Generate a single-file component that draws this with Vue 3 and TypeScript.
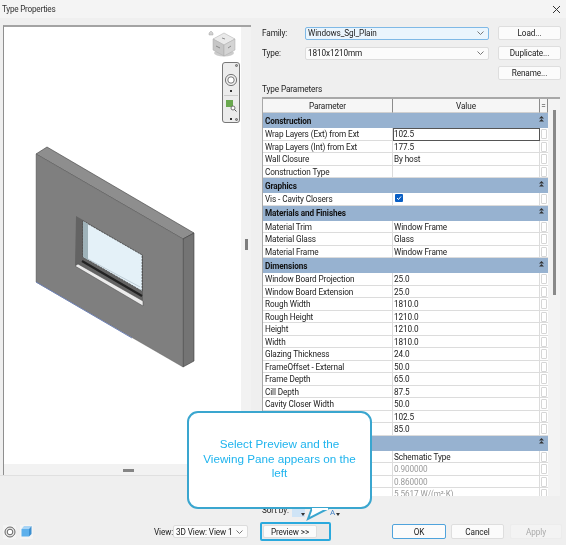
<script setup lang="ts">
type Row = { kind: 'band' | 'row'; name: string; value?: string; check?: boolean; active?: boolean; muted?: boolean }
const rows: Row[] = [
  { kind: 'band', name: 'Construction' },
  { kind: 'row', name: 'Wrap Layers (Ext) from Ext', value: '102.5', active: true },
  { kind: 'row', name: 'Wrap Layers (Int) from Ext', value: '177.5' },
  { kind: 'row', name: 'Wall Closure', value: 'By host' },
  { kind: 'row', name: 'Construction Type', value: '' },
  { kind: 'band', name: 'Graphics' },
  { kind: 'row', name: 'Vis - Cavity Closers', check: true },
  { kind: 'band', name: 'Materials and Finishes' },
  { kind: 'row', name: 'Material Trim', value: 'Window Frame' },
  { kind: 'row', name: 'Material Glass', value: 'Glass' },
  { kind: 'row', name: 'Material Frame', value: 'Window Frame' },
  { kind: 'band', name: 'Dimensions' },
  { kind: 'row', name: 'Window Board Projection', value: '25.0' },
  { kind: 'row', name: 'Window Board Extension', value: '25.0' },
  { kind: 'row', name: 'Rough Width', value: '1810.0' },
  { kind: 'row', name: 'Rough Height', value: '1210.0' },
  { kind: 'row', name: 'Height', value: '1210.0' },
  { kind: 'row', name: 'Width', value: '1810.0' },
  { kind: 'row', name: 'Glazing Thickness', value: '24.0' },
  { kind: 'row', name: 'FrameOffset - External', value: '50.0' },
  { kind: 'row', name: 'Frame Depth', value: '65.0' },
  { kind: 'row', name: 'Cill Depth', value: '87.5' },
  { kind: 'row', name: 'Cavity Closer Width', value: '50.0' },
  { kind: 'row', name: '', value: '102.5' },
  { kind: 'row', name: '', value: '85.0' },
  { kind: 'band', name: '' },
  { kind: 'row', name: '', value: 'Schematic Type' },
  { kind: 'row', name: '', value: '0.900000', muted: true },
  { kind: 'row', name: '', value: '0.860000', muted: true },
  { kind: 'row', name: '', value: '5.5617 W/(m²·K)', muted: true }
]
</script>

<template>
  <div class="dialog">
    <header class="title">
      <span>Type Properties</span>
      <svg class="close" width="9" height="9" viewBox="0 0 9 9"><path d="M1 1l7 7M8 1l-7 7" stroke="#333" stroke-width="1" fill="none" /></svg>
    </header>

    <div class="main">
      <section class="preview">
        <div class="canvas">
          <svg class="model" width="237" height="437" viewBox="0 0 237 437">
            <g transform="translate(-4 -27)">
              <polygon points="36,154 47,147 194,233 183,239" fill="#8e8e8e" stroke="#3c3c3c" stroke-width=".6" />
              <polygon points="183,239 194,233 194,361 183,367" fill="#747474" stroke="#3c3c3c" stroke-width=".6" />
              <polygon points="36,154 183,239 183,367 36,282" fill="#7f7f7f" stroke="#555" stroke-width=".4" />
              <path d="M36 282L132 338" stroke="#6f83b8" stroke-width="1" fill="none" />
              <polygon points="76,216 143,255 143,303 75,266" fill="#636363" />
              <polygon points="83,221 142,255 142,291 83,257" fill="#e4f1f8" stroke="#333" stroke-width=".6" stroke-dasharray="2 1" />
              <polygon points="83,221 88,224 88,260 83,257" fill="#9fb3ba" />
              <path d="M88 259L140 287" stroke="#a9b9c2" stroke-width=".6" fill="none" />
              <path d="M82 261L142 296" stroke="#222" stroke-width="2.2" fill="none" />
              <polygon points="75,266 78,264 143,301 143,306" fill="#ececec" stroke="#444" stroke-width=".5" />
            </g>
          </svg>

          <svg class="cube" width="28" height="32" viewBox="0 0 28 32">
            <path d="M1 5l2-2 2 2v2H1z" fill="#d2d2d2" stroke="#999" stroke-width=".4" />
            <ellipse cx="16" cy="25" rx="10" ry="3.5" fill="#aaa" opacity=".6" />
            <polygon points="16,5 27,11 16,17 5,11" fill="#e9e9e9" stroke="#aaa" stroke-width=".5" />
            <polygon points="5,11 16,17 16,28 5,22" fill="#c6c6c6" stroke="#aaa" stroke-width=".5" />
            <polygon points="16,17 27,11 27,22 16,28" fill="#d4d4d4" stroke="#aaa" stroke-width=".5" />
            <path d="M14 10l3 1M8 18l4 2M20 20l3-2" stroke="#777" stroke-width=".8" />
          </svg>

          <div class="navbar">
            <i class="screw top"></i>
            <svg width="14" height="14" viewBox="0 0 14 14" class="nav-wheel">
              <circle cx="7" cy="7" r="5.6" fill="#eee" stroke="#777" stroke-width="1" />
              <circle cx="7" cy="7" r="3.2" fill="#fff" stroke="#777" stroke-width="1" />
            </svg>
            <i class="dot"></i>
            <i class="rule"></i>
            <svg width="12" height="12" viewBox="0 0 12 12" class="nav-zoom">
              <rect x="1" y="0" width="7" height="7" fill="#6aa84f" />
              <circle cx="8" cy="8" r="2" fill="#fff" stroke="#555" stroke-width=".8" />
              <path d="M9.5 9.5L11.5 11.5" stroke="#555" stroke-width="1" />
            </svg>
            <i class="dot low"></i>
            <i class="screw bottom"></i>
          </div>
        </div>
        <div class="hband"><i class="grip"></i></div>
        <i class="vgrip"></i>
      </section>

      <section class="form">
        <div class="fields">
          <label>Family:</label>
          <div class="combo focused"><span>Windows_Sgl_Plain</span><svg width="7" height="4" viewBox="0 0 7 4"><path d="M.5.5l3 3 3-3" stroke="#777" fill="none" /></svg></div>
          <button class="btn">Load...</button>
          <label>Type:</label>
          <div class="combo"><span>1810x1210mm</span><svg width="7" height="4" viewBox="0 0 7 4"><path d="M.5.5l3 3 3-3" stroke="#777" fill="none" /></svg></div>
          <button class="btn">Duplicate...</button>
          <button class="btn rename">Rename...</button>
        </div>

        <div class="tp-label">Type Parameters</div>

        <div class="table-wrap">
          <div class="table">
            <div class="thead">
              <div class="th c1">Parameter</div>
              <div class="th c2">Value</div>
              <div class="th c3">=</div>
            </div>
            <template v-for="(r, i) in rows" :key="i">
              <div v-if="r.kind === 'band'" class="band">
                <span>{{ r.name }}</span>
                <svg width="5" height="6" viewBox="0 0 5 6"><path d="M2.5 0L5 2.6H0zM2.5 3L5 5.6H0z" fill="#333" /></svg>
              </div>
              <div v-else class="row">
                <div class="td c1">{{ r.name }}</div>
                <div class="td c2" :class="{ active: r.active, muted: r.muted }">
                  <span v-if="r.check" class="check"><svg width="6" height="6" viewBox="0 0 6 6"><path d="M1 3l1.5 1.5L5 1.5" stroke="#fff" stroke-width="1" fill="none" /></svg></span>
                  <template v-else>{{ r.value }}</template>
                </div>
                <div class="td c3"><i></i></div>
              </div>
            </template>
          </div>
          <div class="scroll"><i></i></div>
        </div>

        <div class="sort">
          <span class="sort-label">Sort by:</span>
          <i class="sort-a"><b></b></i>
          <span class="sort-b">A<b></b></span>
        </div>
      </section>
    </div>

    <footer class="footer">
      <div class="tool tool-wheel">
        <svg width="12" height="12" viewBox="0 0 12 12"><circle cx="6" cy="6" r="5" fill="#e8e8e8" stroke="#666" /><circle cx="6" cy="6" r="2.8" fill="#fff" stroke="#666" /></svg>
      </div>
      <div class="tool">
        <svg width="11" height="11" viewBox="0 0 11 11"><polygon points="3,0 10.5,0 8,3 .5,3" fill="#a8d4f5" /><polygon points=".5,3 8,3 8,10.5 .5,10.5" fill="#5db0ec" /><polygon points="8,3 10.5,0 10.5,8 8,10.5" fill="#3c8fd0" /></svg>
      </div>
      <span class="view-label">View:</span>
      <div class="combo view-combo"><span>3D View: View 1</span><svg width="7" height="4" viewBox="0 0 7 4"><path d="M.5.5l3 3 3-3" stroke="#777" fill="none" /></svg></div>
      <div class="hilite"><button class="btn prev">Preview &gt;&gt;</button></div>
      <button class="btn ok">OK</button>
      <button class="btn cancel">Cancel</button>
      <button class="btn apply" disabled>Apply</button>
    </footer>

    <aside class="callout">
      <p>Select Preview and the<br />Viewing Pane appears on the<br />left</p>
      <svg class="tail" width="34" height="14" viewBox="0 0 34 14">
        <path d="M11 0L7 11L28 0" fill="#fff" stroke="#3aa6cf" stroke-width="2" />
        <rect x="11" y="0" width="16" height="2" fill="#fff" />
      </svg>
    </aside>
  </div>
</template>

<style scoped>
.dialog {
  position: relative;
  width: 566px;
  height: 545px;
  overflow: hidden;
  display: flex;
  flex-direction: column;
  background: #efefef;
  color: #222;
  font-family: Roboto, "Noto Sans", sans-serif;
  font-size: 8.2px;
  letter-spacing: -0.1px;
  filter: blur(0.35px);
}
.title {
  height: 18px;
  flex: none;
  display: flex;
  align-items: center;
  justify-content: space-between;
  padding: 0 5px 0 2px;
  background: #f4f4f4;
  font-size: 8.2px;
  letter-spacing: -0.25px;
  color: #333;
}
.main {
  flex: none;
  height: 494px;
  margin-top: 7px;
  display: flex;
  align-items: flex-start;
}
.preview {
  position: relative;
  flex: none;
  width: 248px;
  margin-left: 3px;
  height: 450px;
  border-top: 2px solid #a3a3a3;
  border-left: 1px solid #8f8f8f;
  box-sizing: border-box;
  background: #f2f2f2;
  display: flex;
  flex-direction: column;
}
.preview::after {
  content: "";
  position: absolute;
  left: -4px;
  right: -12px;
  bottom: -1px;
  height: 1px;
  background: #e0e0e0;
}
.canvas {
  position: relative;
  flex: none;
  width: 237px;
  height: 437px;
  background: #fff;
}
.model { position: absolute; left: 0; top: 0; }
.cube { position: absolute; left: 204px; top: 1px; }
.navbar {
  position: absolute;
  left: 218px;
  top: 35px;
  width: 18px;
  height: 61px;
  box-sizing: border-box;
  border: 1px solid #777;
  border-radius: 3px;
  background: #ececec;
  display: flex;
  flex-direction: column;
  align-items: center;
  padding-top: 10px;
}
.screw {
  position: absolute;
  right: 1px;
  width: 3px;
  height: 3px;
  border-radius: 50%;
  background: #aaa;
  border: 0.5px solid #666;
  box-sizing: border-box;
}
.screw.top { top: 1px; }
.screw.bottom { bottom: 1px; }
.nav-wheel { flex: none; }
.dot { width: 2px; height: 2px; background: #333; margin-top: 3px; flex: none; }
.dot.low { margin-top: 6px; }
.rule { width: 14px; height: 1px; background: #ccc; margin-top: 3px; flex: none; }
.nav-zoom { margin-top: 4px; flex: none; }
.hband {
  flex: none;
  height: 11px;
  display: flex;
  align-items: center;
  justify-content: center;
}
.grip { width: 11px; height: 3px; background: #858585; margin-left: 1px; margin-top: 1px; }
.vgrip {
  position: absolute;
  right: 3px;
  top: 212px;
  width: 3px;
  height: 11px;
  background: #7d7d7d;
}
.form {
  flex: none;
  width: 299px;
  margin-left: 11px;
  padding-top: 1px;
}
.fields {
  display: grid;
  grid-template-columns: 43px 184px 72px;
  grid-template-rows: 14px 14px 14px;
  row-gap: 6px;
  align-items: center;
}
.fields .btn { margin-left: 9px; width: 63px; }
.rename { grid-column: 3; }
.combo {
  height: 13px;
  box-sizing: border-box;
  display: flex;
  align-items: center;
  justify-content: space-between;
  padding: 0 4px 0 2px;
  background: #fbfbfb;
  border: 1px solid #dcdcdc;
  border-radius: 2px;
}
.combo.focused { background: #eaf5fd; border-color: #7fb9e6; }
.btn {
  height: 14px;
  padding: 0;
  box-sizing: border-box;
  background: #fbfbfb;
  border: 1px solid #dedede;
  border-radius: 2px;
  font: inherit;
  letter-spacing: inherit;
  color: #222;
}
.tp-label { margin-top: 3px; height: 13px; line-height: 13px; }
.table-wrap {
  margin-top: 1px;
  width: 298px;
  height: 399px;
  overflow: hidden;
  display: flex;
  border-top: 2px solid #a8a8a8;
  border-left: 1px solid #a8a8a8;
  box-sizing: border-box;
  background: #fff;
}
.table { flex: none; width: 285px; }
.thead { display: flex; height: 14px; background: #f6f6f6; }
.th {
  box-sizing: border-box;
  text-align: center;
  line-height: 14px;
  border-right: 1px solid #8c8c8c;
  border-bottom: 1px solid #d0d0d0;
}
.c1 { width: 130px; flex: none; }
.c2 { width: 147px; flex: none; }
.c3 { width: 8px; flex: none; }
.band {
  height: 15px;
  box-sizing: border-box;
  display: flex;
  align-items: center;
  justify-content: space-between;
  padding: 0 4px 0 2px;
  background: #97b2d0;
  font-weight: 700;
  color: #111;
}
.band svg { margin-top: -4px; }
.row { display: flex; height: 12.5px; }
.td {
  box-sizing: border-box;
  height: 12.5px;
  line-height: 12.5px;
  padding-left: 2px;
  white-space: nowrap;
  overflow: hidden;
  border-right: 1px solid #dcdcdc;
  border-bottom: 1px solid #dcdcdc;
}
.td.c2 { padding-left: 1px; }
.td.active { border: 1px solid #555; padding-left: 0; line-height: 10.5px; }
.td.muted { color: #9a9a9a; }
.td.c3 { padding: 1px 0 0 1px; border-right: none; }
.td.c3 i {
  display: block;
  width: 6px;
  height: 10px;
  border: 1px solid #d6d6d6;
  border-radius: 1px;
  box-sizing: border-box;
}
.check {
  display: flex;
  align-items: center;
  justify-content: center;
  width: 8px;
  height: 8px;
  margin: 1px 0 0 1px;
  border-radius: 1px;
  background: #0a5fc4;
}
.scroll {
  flex: 1;
  background: #f3f3f3;
  position: relative;
}
.scroll i {
  position: absolute;
  left: 5px;
  top: 11px;
  width: 3px;
  height: 185px;
  background: #8a8a8a;
}
.sort {
  display: flex;
  align-items: center;
  height: 15px;
  margin-top: 6px;
}
.sort-label { width: 30px; flex: none; }
.sort-a {
  width: 13px;
  height: 9px;
  margin-top: 6px;
  background: #cfe4f6;
  position: relative;
}
.sort-a b, .sort-b b {
  position: absolute;
  right: 0;
  bottom: 1px;
  width: 0;
  height: 0;
  border-left: 2px solid transparent;
  border-right: 2px solid transparent;
  border-top: 3px solid #333;
}
.sort-b {
  position: relative;
  width: 10px;
  margin-left: 25px;
  margin-top: 6px;
  font-size: 8px;
  color: #3f7fc4;
}
.footer {
  flex: none;
  display: flex;
  align-items: center;
  height: 19px;
  margin-top: 3px;
}
.tool {
  width: 13px;
  height: 14px;
  display: flex;
  align-items: center;
  justify-content: center;
  background: #f4f4f4;
}
.tool-wheel { margin-left: 3px; margin-right: 4px; }
.view-label { margin-left: 121px; width: 19px; }
.view-combo { width: 75px; height: 13px; white-space: nowrap; }
.hilite {
  margin-left: 12px;
  width: 71px;
  height: 19px;
  box-sizing: border-box;
  border: 2px solid #2aa9dd;
  border-radius: 2px;
  padding: 1px;
  background: #e9e9e9;
}
.prev { width: 54px; height: 13px; display: block; }
.ok { margin-left: 61px; width: 54px; height: 15px; border-color: #4fa3dc; }
.cancel { margin-left: 5px; width: 53px; height: 15px; }
.apply { margin-left: 6px; width: 52px; height: 15px; color: #aaa; background: #f3f3f3; border-color: #ececec; }
.callout {
  position: absolute;
  left: 187px;
  top: 411px;
  width: 185px;
  height: 98px;
  box-sizing: border-box;
  background: #fff;
  border: 2px solid #3aa6cf;
  border-radius: 11px;
  display: flex;
  align-items: center;
  justify-content: center;
  padding-bottom: 2px;
}
.callout p {
  margin: 0;
  text-align: center;
  font-family: "Liberation Sans", Arial, sans-serif;
  font-size: 11.7px;
  letter-spacing: 0;
  line-height: 14.5px;
  color: #1fb4ee;
}
.tail { position: absolute; left: 112px; top: 95px; }
</style>
